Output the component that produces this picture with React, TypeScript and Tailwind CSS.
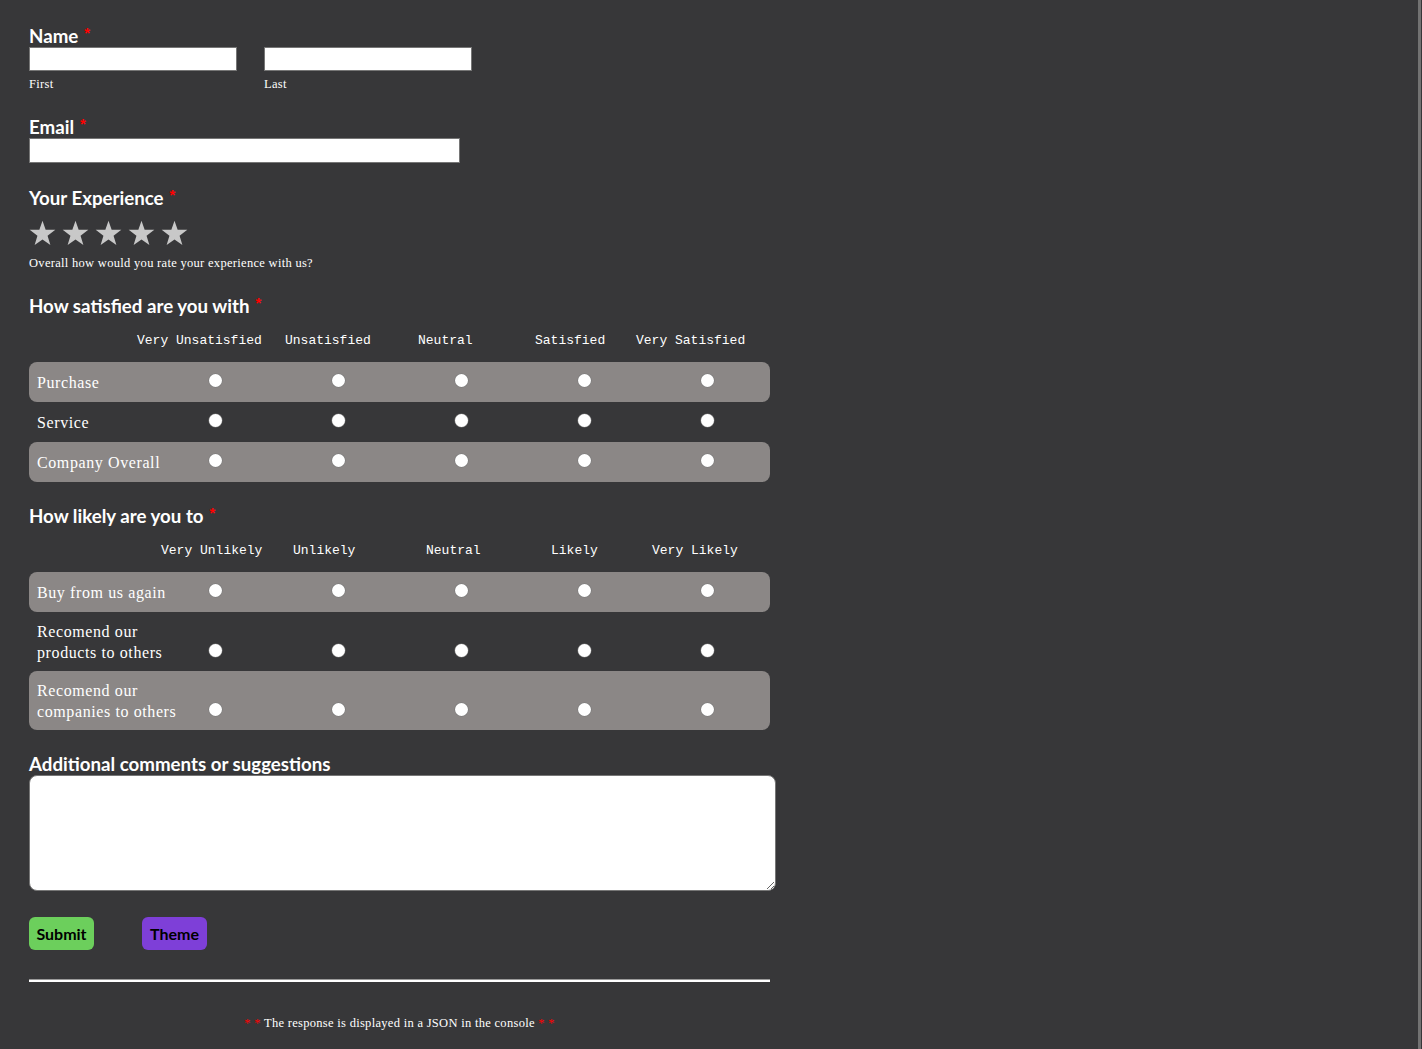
import React from "react";

const heading = "font-['Lato','Noto_Sans',sans-serif] font-bold text-[18.7px] leading-[22px] text-white";
const serif = "font-['Liberation_Serif','Times_New_Roman',serif]";
const small = `${serif} text-[12.5px] leading-[14px] tracking-[0.3px] text-white`;
const mono = "font-['Liberation_Mono','DejaVu_Sans_Mono',monospace] text-[13px] leading-[16px] text-white";

function Req() {
  return (
    <span className="ml-[6px] font-['Liberation_Sans',sans-serif] text-[15px] font-bold align-top leading-[16px] text-[#ff0000]">
      *
    </span>
  );
}

function Star() {
  return (
    <svg width="27" height="26" viewBox="0 0 24 23">
      <polygon
        points="12,0.5 14.8,8.6 23.4,8.7 16.5,13.9 19,22.2 12,17.2 5,22.2 7.5,13.9 0.6,8.7 9.2,8.6"
        fill="#c8c8c8"
      />
    </svg>
  );
}

function Radio() {
  return <span className="block w-[13px] h-[13px] rounded-full bg-white shadow-[0_0_0_0.5px_#777]" />;
}

function Matrix({
  headers,
  rows,
}: {
  headers: { label: string; left: number }[];
  rows: string[][];
}) {
  return (
    <div className="w-[741px]">
      <div className={`relative h-[16px] ${mono}`}>
        {headers.map((h) => (
          <span key={h.label} className="absolute top-0 whitespace-nowrap" style={{ left: h.left }}>
            {h.label}
          </span>
        ))}
      </div>
      <div className="mt-[13px] flex flex-col">
        {rows.map((lines, i) => (
          <div
            key={i}
            className={`flex items-end min-h-[40px] ${lines.length > 1 ? "py-[8.5px]" : "py-[9px]"} rounded-[8px] ${
              i % 2 === 0 ? "bg-[#8b8786]" : ""
            }`}
          >
            <div
              className={`w-[125px] shrink-0 pl-[8px] self-center ${serif} text-[16px] leading-[21px] tracking-[0.6px] text-white`}
            >
              <div className="w-[150px]">
                {lines.map((l) => (
                  <div key={l} className="whitespace-nowrap">{l}</div>
                ))}
              </div>
            </div>
            {[0, 1, 2, 3, 4].map((c) => (
              <div key={c} className="w-[123px] flex justify-center pb-[6px]">
                <Radio />
              </div>
            ))}
          </div>
        ))}
      </div>
    </div>
  );
}

export default function App() {
  return (
    <div className="min-h-screen bg-[#373739] flex">
      <div className="w-[1421px] min-h-screen border-r-[3px] border-[#727272] pl-[29px] pt-[25px]">
        {/* Name */}
        <h3 className={heading}>
          Name<Req />
        </h3>
        <div className="flex gap-[27px]">
          <div>
            <input className="block w-[208px] h-[24px] bg-white border border-[#767676]" />
            <div className={`mt-[6px] ${small}`}>First</div>
          </div>
          <div>
            <input className="block w-[208px] h-[24px] bg-white border border-[#767676]" />
            <div className={`mt-[6px] ${small}`}>Last</div>
          </div>
        </div>

        {/* Email */}
        <h3 className={`mt-[25px] ${heading}`}>
          Email<Req />
        </h3>
        <input className="block w-[431px] h-[25px] bg-white border border-[#767676]" />

        {/* Experience */}
        <h3 className={`mt-[24px] ${heading}`}>
          Your Experience<Req />
        </h3>
        <div className="mt-[11px] flex gap-[6px]">
          {[0, 1, 2, 3, 4].map((i) => (
            <Star key={i} />
          ))}
        </div>
        <p className={`mt-[10px] ${small}`}>Overall how would you rate your experience with us?</p>

        {/* Satisfaction */}
        <h3 className={`mt-[25px] ${heading}`}>
          How satisfied are you with<Req />
        </h3>
        <div className="mt-[16px]">
          <Matrix
            headers={[
              { label: "Very Unsatisfied", left: 108 },
              { label: "Unsatisfied", left: 256 },
              { label: "Neutral", left: 389 },
              { label: "Satisfied", left: 506 },
              { label: "Very Satisfied", left: 607 },
            ]}
            rows={[["Purchase"], ["Service"], ["Company Overall"]]}
          />
        </div>

        {/* Likelihood */}
        <h3 className={`mt-[23px] ${heading}`}>
          How likely are you to<Req />
        </h3>
        <div className="mt-[16px]">
          <Matrix
            headers={[
              { label: "Very Unlikely", left: 132 },
              { label: "Unlikely", left: 264 },
              { label: "Neutral", left: 397 },
              { label: "Likely", left: 522 },
              { label: "Very Likely", left: 623 },
            ]}
            rows={[
              ["Buy from us again"],
              ["Recomend our", "products to others"],
              ["Recomend our", "companies to others"],
            ]}
          />
        </div>

        {/* Comments */}
        <h3 className={`mt-[23px] ${heading}`}>Additional comments or suggestions</h3>
        <textarea className="block w-[747px] h-[116px] bg-white rounded-[8px] border border-[#767676]" />

        <div className="mt-[26px] flex gap-[48px]">
          <button className="h-[33px] w-[65px] rounded-[6px] bg-[#6ccf5c] text-black font-['Lato',sans-serif] font-bold text-[16px]">
            Submit
          </button>
          <button className="h-[33px] w-[65px] rounded-[6px] bg-[#7e3fd8] text-black font-['Lato',sans-serif] font-bold text-[16px]">
            Theme
          </button>
        </div>

        <div className="mt-[29px] w-[741px] h-[3px] bg-white border-t border-[#9a9a9a]" />

        <p className={`mt-[34px] w-[741px] text-center ${small}`}>
          <span className="text-[#ff0000]">* *</span> The response is displayed in a JSON in the console{" "}
          <span className="text-[#ff0000]">* *</span>
        </p>
      </div>
    </div>
  );
}
